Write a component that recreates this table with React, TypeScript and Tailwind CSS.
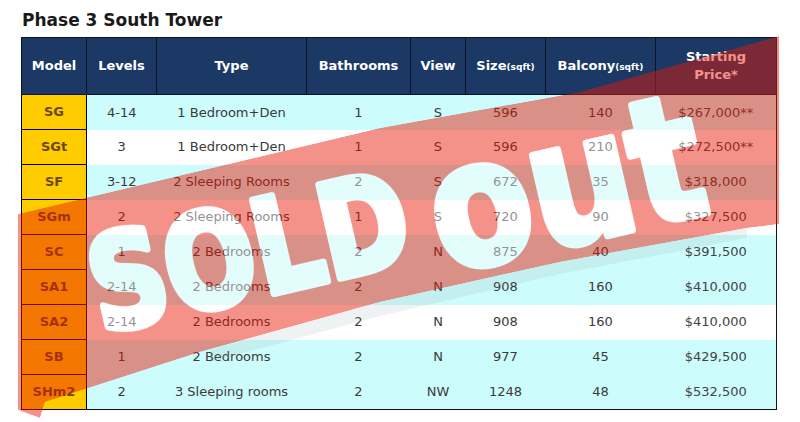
import React from "react";

type Row = {
  model: string;
  levels: string;
  type: string;
  bath: string;
  view: string;
  size: string;
  balcony: string;
  price: string;
  bg: "cyan" | "white";
};

const rows: Row[] = [
  { model: "SG", levels: "4-14", type: "1 Bedroom+Den", bath: "1", view: "S", size: "596", balcony: "140", price: "$267,000**", bg: "cyan" },
  { model: "SGt", levels: "3", type: "1 Bedroom+Den", bath: "1", view: "S", size: "596", balcony: "210", price: "$272,500**", bg: "white" },
  { model: "SF", levels: "3-12", type: "2 Sleeping Rooms", bath: "2", view: "S", size: "672", balcony: "35", price: "$318,000", bg: "cyan" },
  { model: "SGm", levels: "2", type: "2 Sleeping Rooms", bath: "1", view: "S", size: "720", balcony: "90", price: "$327,500", bg: "white" },
  { model: "SC", levels: "1", type: "2 Bedrooms", bath: "2", view: "N", size: "875", balcony: "40", price: "$391,500", bg: "cyan" },
  { model: "SA1", levels: "2-14", type: "2 Bedrooms", bath: "2", view: "N", size: "908", balcony: "160", price: "$410,000", bg: "cyan" },
  { model: "SA2", levels: "2-14", type: "2 Bedrooms", bath: "2", view: "N", size: "908", balcony: "160", price: "$410,000", bg: "white" },
  { model: "SB", levels: "1", type: "2 Bedrooms", bath: "2", view: "N", size: "977", balcony: "45", price: "$429,500", bg: "cyan" },
  { model: "SHm2", levels: "2", type: "3 Sleeping rooms", bath: "2", view: "NW", size: "1248", balcony: "48", price: "$532,500", bg: "cyan" },
];

const th = "border border-[#0a1424] bg-[#1c3864] text-center align-middle text-[13px] font-bold text-white p-0";
const td = "h-[35px] p-0 text-center align-middle";

// top edge, right edge, ragged bottom edge, left edge
const stampPts =
  "18,214 380,128 580,92 779,36 779,224 747,228 560,262 380,302 200,352 45,402 40,418 18,410";

function SoldOutStamp() {
  const font = "'DejaVu Sans', 'Liberation Sans', sans-serif";
  const letters = (fill: string, opacity?: number) => (
    <g fill={fill} stroke={fill} strokeWidth={8} strokeLinejoin="round" opacity={opacity} fontFamily={font} fontWeight={700}>
      <text transform="translate(101,333) rotate(-13)" fontSize={130} textLength={324} lengthAdjust="spacingAndGlyphs">
        SOLD
      </text>
      <text transform="translate(444,273) rotate(-13)" fontSize={172} textLength={276} lengthAdjust="spacingAndGlyphs">
        out
      </text>
    </g>
  );

  return (
    <svg className="pointer-events-none absolute inset-0" width={800} height={422} viewBox="0 0 800 422">
      <defs>
        <mask id="stampCut" maskUnits="userSpaceOnUse" x={0} y={0} width={800} height={422}>
          <polygon points={stampPts} fill="white" />
          {letters("black")}
        </mask>
      </defs>
      {/* faint smudge under the stamp */}
      <polygon points="210,350 380,302 560,262 747,228 747,238 560,274 380,316 210,362" fill="#8fa3a3" opacity={0.14} />
      <polygon points={stampPts} fill="rgb(231,24,5)" fillOpacity={0.47} mask="url(#stampCut)" />
      {letters("white", 0.45)}
    </svg>
  );
}

export default function App() {
  return (
    <div className="relative h-[422px] w-[800px] overflow-hidden bg-white font-['DejaVu_Sans',sans-serif]">
      <h1 className="ml-[22px] mt-[10px] text-[17px] font-bold leading-[20px] text-[#1a1a1a]">Phase 3 South Tower</h1>
      <table className="ml-[21px] mt-[7px] w-[755px] table-fixed border-collapse border border-[#111]">
        <colgroup>
          <col className="w-[65px]" />
          <col className="w-[70px]" />
          <col className="w-[150px]" />
          <col className="w-[104px]" />
          <col className="w-[55px]" />
          <col className="w-[80px]" />
          <col className="w-[110px]" />
          <col className="w-[121px]" />
        </colgroup>
        <thead>
          <tr className="h-[57px]">
            <th className={th}>Model</th>
            <th className={th}>Levels</th>
            <th className={th}>Type</th>
            <th className={th}>Bathrooms</th>
            <th className={th}>View</th>
            <th className={th}>
              Size<span className="text-[9px]">(sqft)</span>
            </th>
            <th className={th}>
              Balcony<span className="text-[9px]">(sqft)</span>
            </th>
            <th className={th}>
              <div className="leading-[18px]">
                Starting
                <br />
                Price*
              </div>
            </th>
          </tr>
        </thead>
        <tbody className="text-[13px] text-[#3a3a3a]">
          {rows.map((r) => (
            <tr key={r.model} className={r.bg === "cyan" ? "bg-[#ccfcfc]" : "bg-white"}>
              <td className={`${td} border border-black bg-[#ffcc00] font-bold text-[#6a4812]`}>{r.model}</td>
              <td className={td}>{r.levels}</td>
              <td className={td}>{r.type}</td>
              <td className={td}>{r.bath}</td>
              <td className={td}>{r.view}</td>
              <td className={td}>{r.size}</td>
              <td className={td}>{r.balcony}</td>
              <td className={`${td} text-[#444]`}>{r.price}</td>
            </tr>
          ))}
        </tbody>
      </table>
      <SoldOutStamp />
    </div>
  );
}
